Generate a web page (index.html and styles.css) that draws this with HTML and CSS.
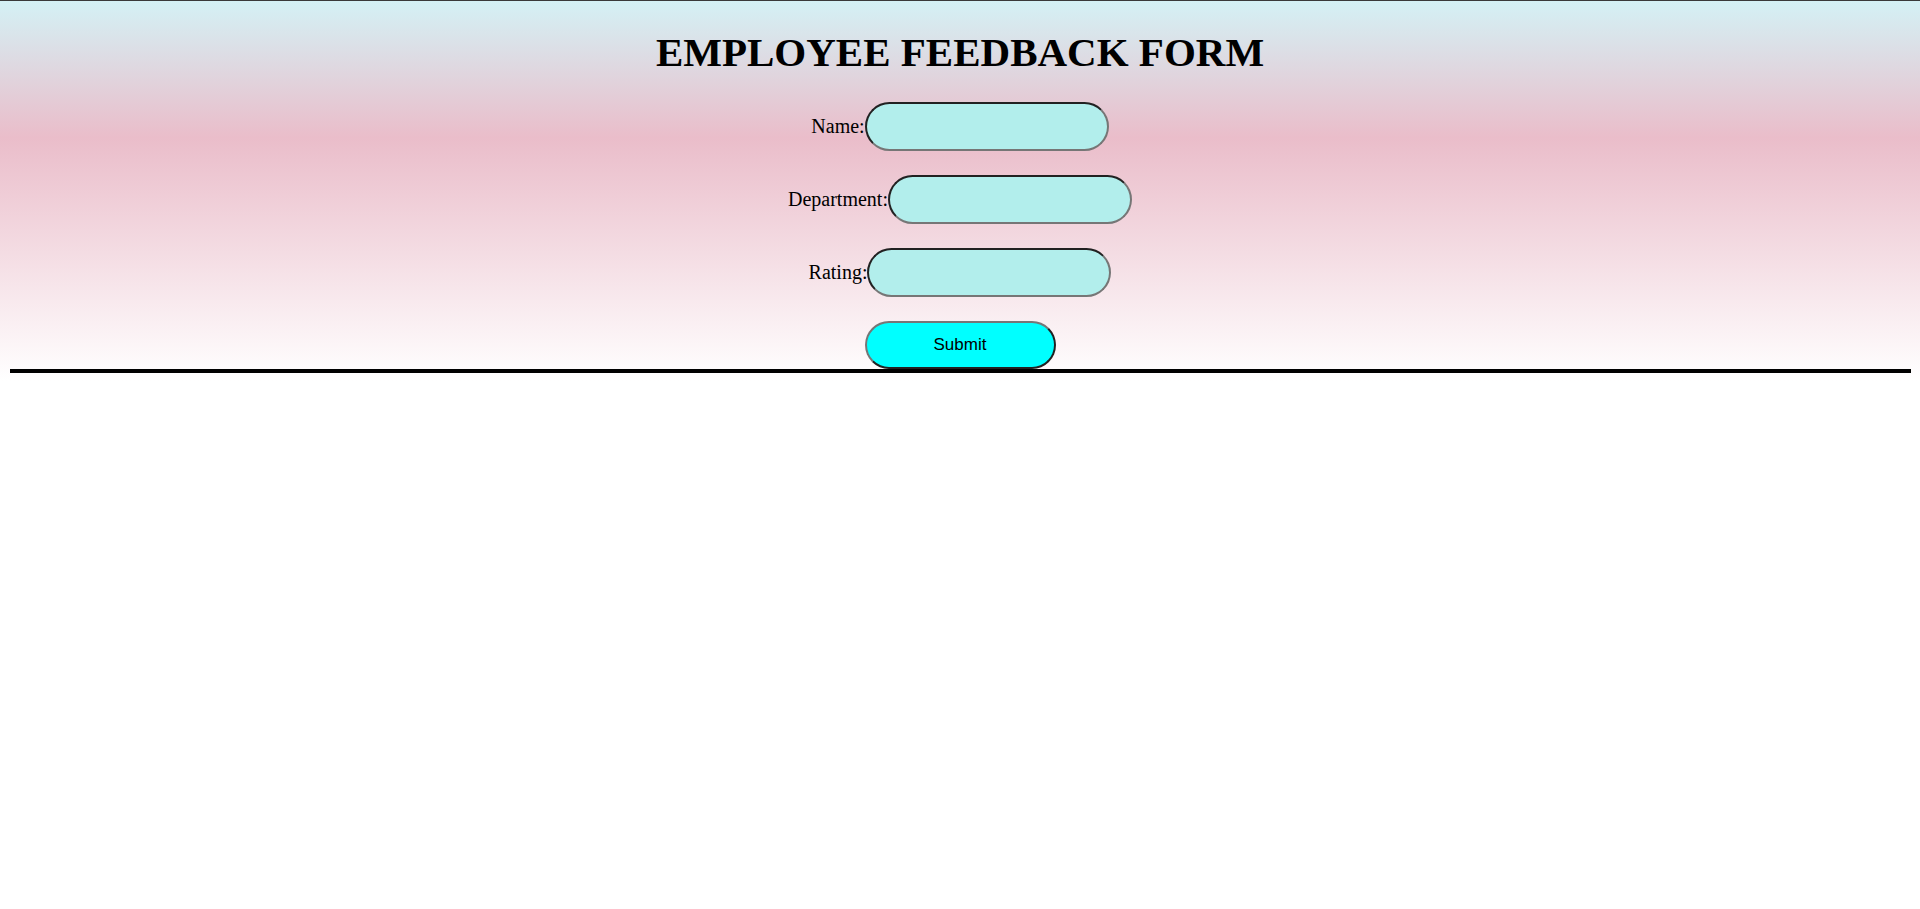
FILE: index.html
```html
<!DOCTYPE html>
<html lang="en">
<head>
  <meta charset="UTF-8" />
  <title>Employee Feedback Form</title>
  <link rel="stylesheet" href="styles.css">
</head>
<body>
  <h1>EMPLOYEE FEEDBACK FORM</h1>

  <!-- Feedback form -->
  <form class="feedback-form">
    <div class="form-row">
      <label for="name">Name:</label><input type="text" id="name" name="name">
    </div>
    <div class="form-row">
      <label for="department">Department:</label><input type="text" id="department" name="department">
    </div>
    <div class="form-row">
      <label for="rating">Rating:</label><input type="text" id="rating" name="rating">
    </div>
    <div class="form-row">
      <button type="submit">Submit</button>
    </div>
  </form>

  <div class="divider"></div>
</body>
</html>
```

FILE: styles.css
```css
/* Page layout */
html {
  border-top: 1px solid #3a3a3a;
}
body {
  margin: 8px;
  font-family: "Liberation Serif", "Times New Roman", serif;
  color: #000;
  background: linear-gradient(to bottom, #d4f1f5 0%, #eabdca 36%, #ffffff 100%) no-repeat;
}
h1 {
  font-size: 41px;
  text-align: center;
  margin: 19px 0 26px;
}
.feedback-form {
  display: flex;
  flex-direction: column;
  align-items: center;
  gap: 24px;
}
.form-row {
  display: flex;
  align-items: center;
  justify-content: center;
}
label {
  font-size: 20px;
}
input {
  box-sizing: border-box;
  width: 244px;
  height: 49px;
  border: 2px inset #767676;
  border-radius: 25px;
  background-color: #b2eeec;
  padding: 0 14px;
}
button {
  box-sizing: border-box;
  width: 191px;
  height: 48px;
  border: 2px outset #767676;
  border-radius: 25px;
  background-color: #00ffff;
  font-family: "Liberation Sans", Arial, sans-serif;
  font-size: 17px;
  color: #000;
}
.divider {
  height: 4px;
  margin: 0 1px 0 2px;
  background-color: #000;
}
```
